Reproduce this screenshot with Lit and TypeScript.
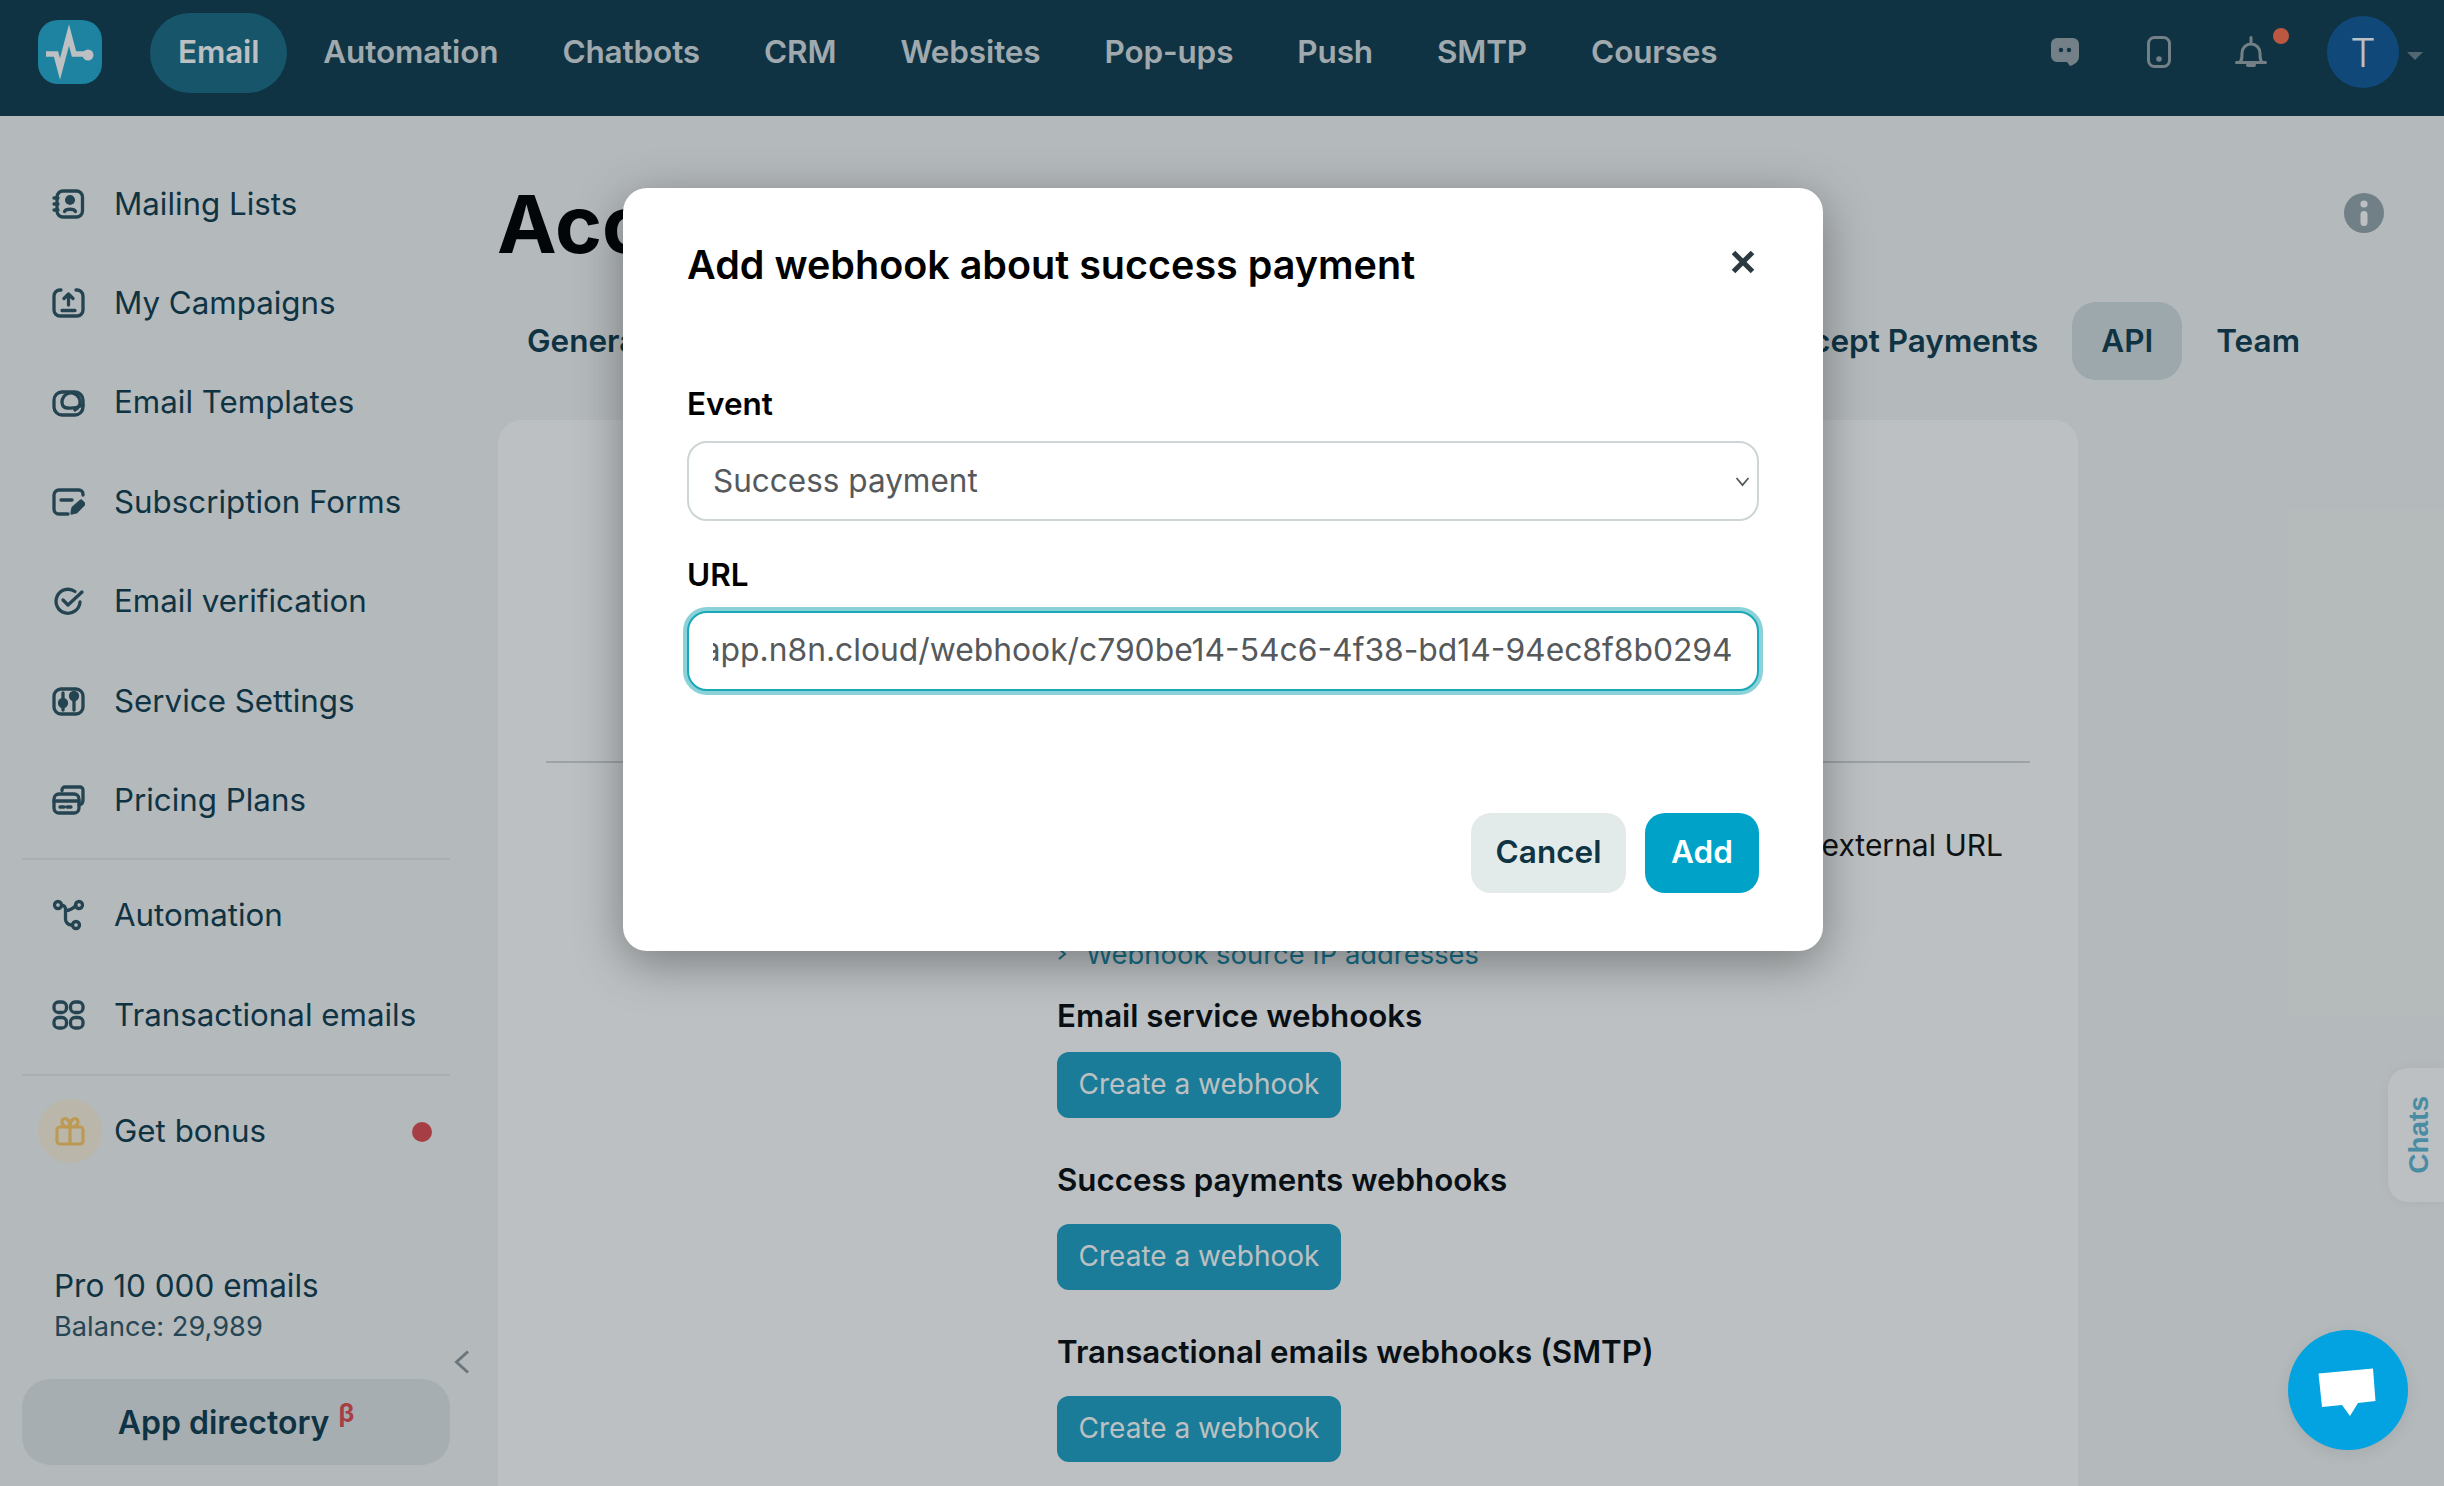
import { LitElement, html, css, svg } from "lit";
import { customElement } from "lit/decorators.js";

const icons: Record<string, unknown> = {
  lists: svg`<rect x="5" y="3" width="25.500" height="26" rx="6"/><path d="M2 10h4M2 16h4M2 22h4"/><circle cx="18" cy="12" r="3.400" fill="currentColor"/><path d="M12.500 23.500c1.500-3 9.500-3 11 0"/>`,
  campaigns: svg`<path d="M9 3H8a6 6 0 0 0-6 6v14a6 6 0 0 0 6 6h17a6 6 0 0 0 6-6V9a6 6 0 0 0-6-6h-1"/><path d="M16.500 18V7M12 11.500l4.500-4.500 4.500 4.500M10 23.500h13"/>`,
  templates: svg`<rect x="2" y="6" width="29" height="23" rx="8"/><path d="M23 24a9 9 0 1 0-12-4c2 3 12 3 20-1"/>`,
  forms: svg`<path d="M31 9V8a4 4 0 0 0-4-4H7A5 5 0 0 0 2 9v14a5 5 0 0 0 5 5h9"/><path d="M9 14h11"/><path d="M20 27l1-5 8-7 3 3-8 8z" fill="currentColor"/>`,
  verify: svg`<path d="M28 17a12 12 0 1 1-5-10.500"/><path d="M11 15l5 5L30 7"/>`,
  settings: svg`<rect x="2" y="4" width="29" height="25" rx="7"/><path d="M11 8v17M22 14v11"/><circle cx="11" cy="18" r="3.500" fill="currentColor"/><circle cx="22" cy="11" r="3.500" fill="currentColor"/>`,
  pricing: svg`<path d="M10 6.500V6a3 3 0 0 1 3-3h15a3 3 0 0 1 3 3v10a5 5 0 0 1-4 5"/><rect x="2" y="10" width="25" height="19" rx="5"/><path d="M2 17h25M8 23h4M15 23h4"/>`,
  automation: svg`<circle cx="6" cy="6" r="3.500"/><circle cx="27" cy="6" r="3.500"/><circle cx="24" cy="26" r="3.500"/><path d="M9.500 6.500c3 0 4 1 4 4V20a6 6 0 0 0 6 6h1M24 6.500c-4 4-7 5-10.500 5"/>`,
  grid: svg`<rect x="2" y="3" width="12.500" height="10.500" rx="4.500"/><rect x="18.500" y="3" width="12.500" height="10.500" rx="4.500"/><rect x="2" y="18.500" width="12.500" height="10.500" rx="4.500"/><rect x="18.500" y="18.500" width="12.500" height="10.500" rx="4.500"/>`,
};

const ic = (n: string) => html`<svg class="ic" viewBox="0 0 33 32" fill="none" stroke="currentColor" stroke-width="3.300" stroke-linecap="round" stroke-linejoin="round">${icons[n]}</svg>`;

const row = (i: string, t: string) => html`<a class="item">${ic(i)}<span>${t}</span></a>`;

@customElement("app-root")
export class AppRoot extends LitElement {
  static styles = css`
    :host { display: block; position: relative; width: 2444px; height: 1486px; overflow: hidden; background: #f5f6f6; font-family: Inter, "Noto Sans", sans-serif; color: #123e51; }
    * { box-sizing: border-box; }
    header { height: 116px; background: #123e51; display: flex; align-items: flex-start; padding: 13px 17px 0 38px; }
    .logo { width: 64px; height: 64px; border-radius: 20px; background: #25acd1; flex: none; margin: 7px 48px 0 0; }
    .logo svg { display: block; width: 64px; height: 64px; }
    nav { display: flex; gap: 8px; flex: 1; }
    nav a { height: 80px; padding: 0 28px 3px; border-radius: 40px; display: flex; align-items: center; font-size: 31.500px; font-weight: 600; color: rgba(255,255,255,.85); letter-spacing: -.14px; }
    nav a.on { background: #1d6d87; color: #fff; }
    .tools { position: relative; height: 116px; width: 376px; margin-top: -13px; }
    .tools svg { position: absolute; }
    .dot { position: absolute; left: 222px; top: 28px; width: 16px; height: 16px; border-radius: 50%; background: #ff6f50; }
    .avatar { position: absolute; left: 276px; top: 16px; width: 72px; height: 72px; border-radius: 50%; background: #145c9c; color: #fff; font-size: 40px; display: flex; align-items: center; justify-content: center; font-weight: 300; }
    .caret { position: absolute; left: 356px; top: 52px; border: 8px solid transparent; border-top-color: #6f8692; border-bottom: 0; }

    .body { display: flex; height: 1370px; }
    aside { width: 498px; flex: none; padding: 38px 48px 21px 22px; display: flex; flex-direction: column; position: relative; }
    .item { height: 99.400px; display: flex; align-items: center; gap: 29px; padding-left: 30px; font-size: 31.300px; flex: none; }
    .ic { width: 33px; height: 32px; color: #2f5566; flex: none; }
    .sep { height: 2px; background: #e6eaea; margin: 8px 0 6px; flex: none; }
    .sep.b { margin: 9px 0 0; }
    .bonus { display: flex; align-items: center; margin-top: 23px; padding-left: 16px; font-size: 31.300px; height: 65px; position: relative; }
    .bonus .circle { width: 64px; height: 64px; border-radius: 50%; background: #fdf2df; display: flex; align-items: center; justify-content: center; margin-right: 12px; }
    .bonus svg { width: 30px; height: 30px; }
    .bonus i { position: absolute; left: 390px; top: 23px; width: 20px; height: 20px; border-radius: 50%; background: #e14f54; }
    .plan { margin-top: auto; padding-left: 32px; }
    .plan b { display: block; font-weight: 400; font-size: 31.500px; line-height: 44px; }
    .plan small { display: block; font-size: 27.200px; line-height: 38px; color: #33586a; }
    .app { margin-top: 33px; height: 86px; border-radius: 28px; background: #e3e7e9; display: flex; align-items: center; justify-content: center; font-weight: 600; font-size: 32px; flex: none; width: 428px; }
    .app sup { color: #e14f54; font-size: 26px; font-weight: 700; margin-left: 9px; position: relative; top: -9px; line-height: 0; vertical-align: baseline; }
    .collapse { position: absolute; left: 453px; top: 1234px; width: 18px; height: 24px; }

    main { flex: 1; position: relative; min-width: 0; padding-right: 60px; }
    .title { height: 186px; padding-top: 60px; margin-left: -1px; }
    h1 { margin: 0; font-size: 80px; line-height: 96px; font-weight: 700; color: #000; }
    .info { position: absolute; left: 1846px; top: 77px; width: 40px; height: 40px; }
    .tabs { display: flex; justify-content: space-between; height: 118px; padding-right: 55px; }
    .tabs > div { display: flex; gap: 5px; }
    .tab { height: 78px; padding: 0 29px 2px; display: flex; align-items: center; font-size: 31.500px; font-weight: 600; border-radius: 24px; }
    .tab.on { background: #d3dee0; }
    .card { width: 1580px; height: 1100px; background: #fff; border-radius: 24px; padding: 341px 48px 0; color: #000; }
    .rule { height: 2px; background: #d2d7d8; }
    .col { padding-left: 511px; }
    .intro { margin: 60px 27px 0 0; text-align: right; font-size: 30px; line-height: 44px; white-space: nowrap; color: #111; }
    .link { margin: 65px 0 0; display: flex; align-items: center; gap: 18px; color: #1c8fae; font-size: 27.400px; line-height: 44px; }
    .link svg { width: 11px; height: 14px; }
    h3 { margin: 40px 0 22px; font-size: 31.300px; line-height: 44px; font-weight: 600; color: #0a0f12; }
    h3.first { margin: 18px 0 14px; }
    .mk { height: 66px; width: 284px; border-radius: 12px; background: #21a2c6; color: #fff; display: flex; align-items: center; justify-content: center; font-size: 28px; padding-bottom: 2px; }

    .chats { position: absolute; right: 0; top: 1068px; width: 56px; height: 134px; border-radius: 20px 0 0 20px; background: #fff; box-shadow: 0 0 12px rgba(0,0,0,.06); display: flex; align-items: center; justify-content: center; color: #63b8d6; font: 700 28px "Liberation Sans", sans-serif; }
    .chats span { writing-mode: vertical-rl; transform: rotate(180deg); margin-left: 6px; }

    .overlay { position: absolute; inset: 0; background: rgba(8,24,28,.27); }
    .fab { position: absolute; left: 2288px; top: 1330px; width: 120px; height: 120px; border-radius: 50%; background: #03a2e0; box-shadow: 0 4px 16px rgba(0,0,0,.08); }
    .fab svg { display: block; }

    .modal { position: absolute; left: 623px; top: 188px; width: 1200px; height: 763px; background: #fff; border-radius: 24px; padding: 48px 64px 0; box-shadow: 0 12px 48px rgba(0,0,0,.35); color: #000; }
    .mhead { display: flex; justify-content: space-between; align-items: center; height: 58px; }
    h2 { margin: 0; font-size: 39.500px; font-weight: 600; line-height: 58px; }
    .x { width: 24px; height: 24px; margin: -6px 4px 0 0; }
    label { display: block; font-size: 31.500px; font-weight: 600; line-height: 44px; }
    label.e { margin-top: 88px; margin-bottom: 15px; }
    label.u { margin-top: 32px; margin-bottom: 14px; }
    .sel { position: relative; }
    .sel svg { position: absolute; right: 9px; top: 35px; width: 15px; height: 11px; pointer-events: none; }
    select, input { display: block; width: 100%; height: 80px; border-radius: 20px; background: #fff; font: 400 31.500px Inter, sans-serif; color: #55595c; padding: 0 24px 2px; outline: none; }
    select { border: 2px solid #ced5d7; appearance: none; -webkit-appearance: none; }
    input { border: 2px solid #1aa7b8; box-shadow: 0 0 0 4px #8bd2d8; font-size: 31.800px; padding: 0 24px 3px; }
    .acts { display: flex; justify-content: flex-end; gap: 19px; margin-top: 122px; }
    .acts button { height: 80px; border: 0; border-radius: 20px; font: 600 31.500px Inter, sans-serif; padding: 0 0 3px; }
    .cancel { width: 155px; background: #e3eaea; color: #0f3443; }
    .add { width: 114px; background: #00a3c7; color: #fff; }
  `;

  firstUpdated() {
    const i = this.renderRoot.querySelector("input") as HTMLInputElement;
    i.scrollLeft = i.scrollWidth;
  }

  render() {
    return html`
      <header>
        <div class="logo"><svg viewBox="0 0 64 64" fill="none" stroke="#fff" stroke-width="5.500" stroke-linejoin="miter"><path d="M8 34H18L22 49L31 15L36 34H50"/><circle cx="50" cy="35" r="5.500" fill="#fff" stroke="none"/></svg></div>
        <nav>
          <a class="on">Email</a><a>Automation</a><a>Chatbots</a><a>CRM</a><a>Websites</a><a>Pop-ups</a><a>Push</a><a>SMTP</a><a>Courses</a>
        </nav>
        <div class="tools">
          <svg style="left:0;top:38px" width="28" height="28" viewBox="0 0 28 28"><path fill="#9ba8ae" d="M6 0h16a6 6 0 0 1 6 6v12c0 5-3 8-9 10l-3-4H6a6 6 0 0 1-6-6V6a6 6 0 0 1 6-6z"/><circle cx="10" cy="12" r="2.200" fill="#123e51"/><circle cx="18" cy="12" r="2.200" fill="#123e51"/></svg>
          <svg style="left:96px;top:36px" width="24" height="32" viewBox="0 0 24 32" fill="none"><rect x="1.500" y="1.500" width="21" height="29" rx="6" stroke="#9ba8ae" stroke-width="3"/><circle cx="12" cy="23" r="2.800" fill="#9ba8ae"/></svg>
          <svg style="left:184px;top:36px" width="32" height="32" viewBox="0 0 32 32" fill="none" stroke="#9ba8ae" stroke-width="3" stroke-linecap="round"><path d="M5 26c2-2 2-4 2-9a9 9 0 0 1 18 0c0 5 0 7 2 9"/><path d="M1.500 26.500h29M16 1.500v5"/><path d="M13 29h6" stroke-width="4"/></svg>
          <span class="dot"></span>
          <span class="avatar">T</span>
          <span class="caret"></span>
        </div>
      </header>
      <div class="body">
        <aside>
          ${row("lists", "Mailing Lists")}
          ${row("campaigns", "My Campaigns")}
          ${row("templates", "Email Templates")}
          ${row("forms", "Subscription Forms")}
          ${row("verify", "Email verification")}
          ${row("settings", "Service Settings")}
          ${row("pricing", "Pricing Plans")}
          <div class="sep"></div>
          ${row("automation", "Automation")}
          ${row("grid", "Transactional emails")}
          <div class="sep b"></div>
          <div class="bonus">
            <span class="circle"><svg viewBox="0 0 30 30" fill="none" stroke="#ffcb6b" stroke-width="3.200" stroke-linejoin="round"><rect x="2" y="11" width="26" height="17" rx="3"/><path d="M15 11v17M15 11C11 11 7 10 7 6s4-4 6-2 2 7 2 7zM15 11c4 0 8-1 8-5s-4-4-6-2-2 7-2 7z"/></svg></span>
            <span>Get bonus</span>
            <i></i>
          </div>
          <div class="plan"><b>Pro 10 000 emails</b><small>Balance: 29,989</small></div>
          <div class="app">App directory<sup>β</sup></div>
          <svg class="collapse" viewBox="0 0 18 24" fill="none" stroke="#8f9a9e" stroke-width="3"><path d="M15 1.500L3.500 12 15 22.500"/></svg>
        </aside>
        <main>
          <div class="title"><h1>Account</h1></div>
          <svg class="info" viewBox="0 0 40 40"><circle cx="20" cy="20" r="20" fill="#98a8ae"/><circle cx="20" cy="11" r="3.600" fill="#fff"/><rect x="16.500" y="18" width="7" height="15" rx="3.500" fill="#fff"/></svg>
          <div class="tabs">
            <div><a class="tab">General</a></div>
            <div><a class="tab">Accept Payments</a><a class="tab on">API</a><a class="tab">Team</a></div>
          </div>
          <section class="card">
            <div class="rule"></div>
            <div class="col">
              <p class="intro">external URL</p>
              <div class="link"><svg viewBox="0 0 11 14" fill="none" stroke="currentColor" stroke-width="2"><path d="M2 2l6 5-6 5"/></svg>Webhook source IP addresses</div>
              <h3 class="first">Email service webhooks</h3>
              <div class="mk">Create a webhook</div>
              <h3>Success payments webhooks</h3>
              <div class="mk">Create a webhook</div>
              <h3>Transactional emails webhooks (SMTP)</h3>
              <div class="mk">Create a webhook</div>
            </div>
          </section>
        </main>
      </div>
      <div class="chats"><span>Chats</span></div>
      <div class="overlay"></div>
      <div class="fab"><svg width="120" height="120" viewBox="0 0 120 120"><path fill="#fff" d="M30.500 43.500L85 38.500L87.500 71L70 73L62 86L54 75L34 77Z"/></svg></div>
      <div class="modal" role="dialog">
        <div class="mhead"><h2>Add webhook about success payment</h2>
          <svg class="x" viewBox="0 0 24 24" fill="none" stroke="#2b3a40" stroke-width="5"><path d="M2.500 2.500l19 19M21.500 2.500l-19 19"/></svg></div>
        <label class="e">Event</label>
        <div class="sel"><select><option>Success payment</option></select>
          <svg viewBox="0 0 15 11" fill="none" stroke="#55595c" stroke-width="1.800"><path d="M1.500 2l6 7 6-7"/></svg></div>
        <label class="u">URL</label>
        <input value="https://sendpulse-demo.app.n8n.cloud/webhook/c790be14-54c6-4f38-bd14-94ec8f8b0294" />
        <div class="acts"><button class="cancel">Cancel</button><button class="add">Add</button></div>
      </div>
    `;
  }
}
